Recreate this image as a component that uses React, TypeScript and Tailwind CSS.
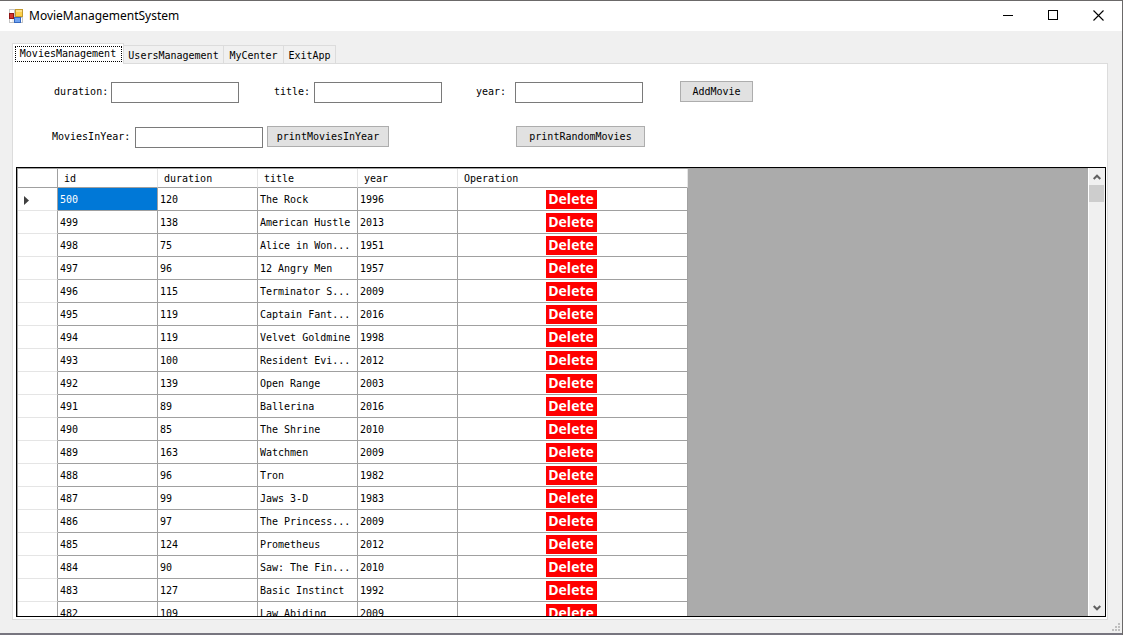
import { useState } from "react";

type Movie = { id: number; duration: number; title: string; year: number };

const movies: Movie[] = [
  { id: 500, duration: 120, title: "The Rock", year: 1996 },
  { id: 499, duration: 138, title: "American Hustle", year: 2013 },
  { id: 498, duration: 75, title: "Alice in Won...", year: 1951 },
  { id: 497, duration: 96, title: "12 Angry Men", year: 1957 },
  { id: 496, duration: 115, title: "Terminator S...", year: 2009 },
  { id: 495, duration: 119, title: "Captain Fant...", year: 2016 },
  { id: 494, duration: 119, title: "Velvet Goldmine", year: 1998 },
  { id: 493, duration: 100, title: "Resident Evi...", year: 2012 },
  { id: 492, duration: 139, title: "Open Range", year: 2003 },
  { id: 491, duration: 89, title: "Ballerina", year: 2016 },
  { id: 490, duration: 85, title: "The Shrine", year: 2010 },
  { id: 489, duration: 163, title: "Watchmen", year: 2009 },
  { id: 488, duration: 96, title: "Tron", year: 1982 },
  { id: 487, duration: 99, title: "Jaws 3-D", year: 1983 },
  { id: 486, duration: 97, title: "The Princess...", year: 2009 },
  { id: 485, duration: 124, title: "Prometheus", year: 2012 },
  { id: 484, duration: 90, title: "Saw: The Fin...", year: 2010 },
  { id: 483, duration: 127, title: "Basic Instinct", year: 1992 },
  { id: 482, duration: 109, title: "Law Abiding", year: 2009 },
];

function AppIcon() {
  return (
    <svg width="14" height="14" viewBox="0 0 14 14" shapeRendering="crispEdges" aria-hidden="true">
      <rect x="0" y="0" width="14" height="14" fill="#c4c4c4" />
      <rect x="1" y="1" width="4" height="3" fill="#fff" />
      <rect x="1" y="10" width="2" height="3" fill="#fff" />
      <rect x="3" y="10" width="2" height="3" fill="#eee" />
      <rect x="12" y="9" width="1" height="4" fill="#fff" />
      <rect x="6" y="0" width="8" height="8" fill="#c39a2c" />
      <rect x="7" y="1" width="6" height="6" fill="#fcd04b" />
      <rect x="7" y="1" width="6" height="2" fill="#fde089" />
      <rect x="0" y="4" width="5" height="6" fill="#8f1414" />
      <rect x="1" y="5" width="3" height="4" fill="#d4362c" />
      <rect x="5" y="8" width="7" height="6" fill="#3568c0" />
      <rect x="6" y="9" width="5" height="4" fill="#6fa2f0" />
    </svg>
  );
}

function TitleBar() {
  return (
    <header className="flex h-[30px] shrink-0 items-center bg-white pl-[9px]">
      <AppIcon />
      <h1 className="ml-1.5 flex-1 font-['Noto_Sans',sans-serif] text-[12px] leading-4">MovieManagementSystem</h1>
      <div className="flex h-full pb-0.5">
        <button type="button" aria-label="Minimize" className="grid w-[46px] place-items-center">
          <svg width="10" height="10" viewBox="0 0 10 10" shapeRendering="crispEdges"><path d="M0 5.5H10" stroke="#000" /></svg>
        </button>
        <button type="button" aria-label="Maximize" className="grid w-11 place-items-center">
          <svg width="10" height="10" viewBox="0 0 10 10" shapeRendering="crispEdges"><path d="M.5 .5H9.5V9.5H.5Z" fill="none" stroke="#000" /></svg>
        </button>
        <button type="button" aria-label="Close" className="grid w-[47px] place-items-center">
          <svg width="11" height="11" viewBox="0 0 11 11"><path d="M.5 .5L10.5 10.5M10.5 .5L.5 10.5" stroke="#000" strokeWidth="1.1" /></svg>
        </button>
      </div>
    </header>
  );
}

function Field({ id, label, labelClass }: { id: string; label: string; labelClass: string }) {
  return (
    <div className="flex items-center self-end">
      <label htmlFor={id} className={`pb-0.5 ${labelClass}`}>{label}</label>
      <input id={id} className="h-[21px] w-32 border border-[#7a7a7a] bg-white px-1 outline-none" />
    </div>
  );
}

const buttonBase = "h-[21px] self-start border border-[#adadad] bg-[#e1e1e1] text-center";
const headCell = "border-r border-b border-r-[#e5e5e5] border-b-[#a0a0a0] pt-0.5 pl-1.5 text-left font-normal";
const bodyCell = "border-r border-b border-[#a0a0a0] pt-0.5 pl-0.5 whitespace-nowrap";

function MovieGrid() {
  return (
    <div className="flex min-h-0 flex-1 border border-black bg-[#ababab]">
      <div className="min-w-0 flex-1 overflow-hidden border-t border-l border-[#a0a0a0]">
        <table className="w-[670px] table-fixed border-separate border-spacing-0 bg-white">
          <colgroup>
            <col className="w-10" />
            <col className="w-[100px]" />
            <col className="w-[100px]" />
            <col className="w-[100px]" />
            <col className="w-[100px]" />
            <col className="w-[230px]" />
          </colgroup>
          <thead>
            <tr className="h-[19px]">
              <th className="border-r border-b border-[#a0a0a0]" aria-label="Row" />
              <th className={headCell}>id</th>
              <th className={headCell}>duration</th>
              <th className={headCell}>title</th>
              <th className={headCell}>year</th>
              <th className={headCell}>Operation</th>
            </tr>
          </thead>
          <tbody>
            {movies.map((m, i) => (
              <tr key={m.id} className="h-[23px]">
                <td className="border-r border-b border-r-[#a0a0a0] border-b-[#e5e5e5] pt-0.5 pl-1.5">
                  {i === 0 && (
                    <svg width="5" height="9" viewBox="0 0 5 9" aria-hidden="true"><path d="M0 0L5 4.5L0 9Z" fill="#404040" /></svg>
                  )}
                </td>
                <td className={i === 0 ? `${bodyCell} bg-[#0078d7] text-white` : bodyCell}>{m.id}</td>
                <td className={bodyCell}>{m.duration}</td>
                <td className={bodyCell}>{m.title}</td>
                <td className={bodyCell}>{m.year}</td>
                <td className="border-r border-b border-[#a0a0a0] pr-0.5">
                  <button type="button" className="mx-auto block h-[19px] w-[51px] bg-[#ff0000] pr-px font-['Open_Sans',sans-serif] text-[14px] leading-[18px] font-bold text-white">
                    <span className="block pb-px">Delete</span>
                  </button>
                </td>
              </tr>
            ))}
          </tbody>
        </table>
      </div>
      <div className="flex w-[17px] shrink-0 flex-col border-l border-white bg-[#f0f0f0]" aria-hidden="true">
        <div className="grid h-[17px] place-items-center">
          <svg width="8" height="6" viewBox="0 0 8 6"><path d="M.7 5L4 1.7L7.3 5" fill="none" stroke="#606060" strokeWidth="2" /></svg>
        </div>
        <div className="mr-px h-[17px] bg-[#cdcdcd]" />
        <div className="flex-1" />
        <div className="grid h-[17px] place-items-center">
          <svg width="8" height="6" viewBox="0 0 8 6"><path d="M.7 1L4 4.3L7.3 1" fill="none" stroke="#606060" strokeWidth="2" /></svg>
        </div>
      </div>
    </div>
  );
}

const tabs = [
  { name: "UsersManagement", width: "w-[100px]" },
  { name: "MyCenter", width: "w-[60px]" },
  { name: "ExitApp", width: "w-[52px]" },
];

export default function App() {
  const [active] = useState("MoviesManagement");
  return (
    <div className="flex h-screen flex-col border-t border-r border-[#6b6969] bg-[#f0f0f0] font-['DejaVu_Sans_Mono',monospace] text-[10px] leading-3 text-black">
      <TitleBar />
      <main className="flex min-h-0 flex-1 flex-col pt-3 pr-3.5 pl-3">
        <div role="tablist" className="flex h-5 items-end">
          <button role="tab" aria-selected={active === "MoviesManagement"} type="button" className="relative z-10 -mb-px flex h-[21px] w-28 justify-center border border-b-0 border-[#dcdcdc] bg-white pt-0.5">
            <span className="block h-4 w-[107px] border border-dotted border-black leading-[14px]">MoviesManagement</span>
          </button>
          {tabs.map((t) => (
            <button key={t.name} role="tab" aria-selected={active === t.name} type="button" className={`h-[18px] border-t border-r border-[#dcdcdc] pt-0.5 text-center ${t.width}`}>
              {t.name}
            </button>
          ))}
        </div>
        <section className="flex min-h-0 flex-1 flex-col border border-[#dcdcdc] bg-white px-[3px] pt-[17px] pr-px pb-0.5">
          <form className="flex flex-col gap-[23px] pb-[19px]" onSubmit={(e) => e.preventDefault()}>
            <div className="flex h-[22px] pl-[38px]">
              <Field id="duration" label="duration:" labelClass="w-[57px]" />
              <div className="w-[35px]" />
              <Field id="title" label="title:" labelClass="w-10" />
              <div className="w-[34px]" />
              <Field id="year" label="year:" labelClass="w-[39px]" />
              <button type="button" className={`ml-[37px] w-[73px] ${buttonBase}`}>AddMovie</button>
            </div>
            <div className="flex h-[22px] pl-9">
              <Field id="moviesInYear" label="MoviesInYear:" labelClass="w-[83px]" />
              <button type="button" className={`ml-1 w-[122px] ${buttonBase}`}>printMoviesInYear</button>
              <button type="button" className={`ml-[127px] w-[129px] ${buttonBase}`}>printRandomMovies</button>
            </div>
          </form>
          <MovieGrid />
        </section>
      </main>
      <footer className="flex h-[15px] shrink-0 items-end justify-end border-b-2 border-b-[#77757f] pr-0.5 pb-0.5">
        <svg width="8" height="8" viewBox="0 0 8 8" shapeRendering="crispEdges" aria-hidden="true">
          <path d="M6 0h2v2h-2zM3 3h2v2h-2zM6 3h2v2h-2zM0 6h2v2h-2zM3 6h2v2h-2zM6 6h2v2h-2z" fill="#bfbfbf" />
        </svg>
      </footer>
    </div>
  );
}
